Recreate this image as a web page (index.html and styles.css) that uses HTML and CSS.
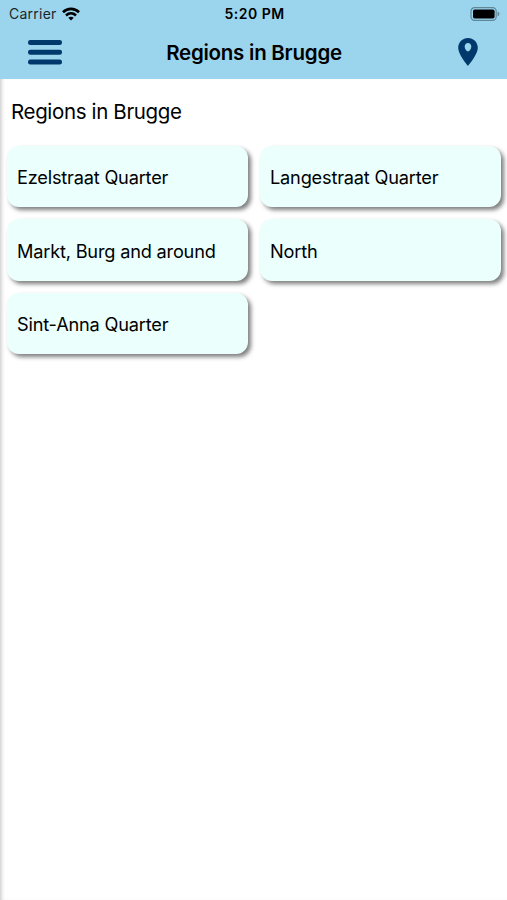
FILE: index.html
```
<!DOCTYPE html>
<html lang="en">
<head>
    <meta charset="UTF-8">
    <meta name="viewport" content="width=device-width, initial-scale=1.0">
    <title>Regions in Brugge</title>
    <link rel="stylesheet" href="styles.css">
</head>
<body>
    <header class="header">
        <div class="status-bar">
            <div class="status-left">
                <span class="carrier">Carrier</span>
                <svg class="wifi" width="18" height="14" viewBox="0 0 18 14" fill="none" stroke="#000" stroke-width="2.7">
                    <path d="M1 5.2C5.6.8 12.4.8 17 5.2"/>
                    <path d="M4 8.4c2.9-2.7 7.1-2.7 10 0"/>
                    <path d="M9 13.6l-2.7-2.8c1.5-1.4 3.9-1.4 5.4 0z" fill="#000" stroke="none"/>
                </svg>
            </div>
            <span class="time">5:20 PM</span>
            <svg class="battery" width="30" height="14" viewBox="0 0 30 14">
                <rect x="1" y=".7" width="25.2" height="12.6" rx="3.6" fill="none" stroke="#5f8798" stroke-width="1.2"/>
                <rect x="3" y="2.4" width="21.6" height="9.2" rx="1.8" fill="#000"/>
                <path d="M27.6 4.6c2.4.8 2.4 4 0 4.8z" fill="#5f8798"/>
            </svg>
        </div>
        <div class="nav-bar">
            <button class="nav-button" title="Menu">
                <svg width="34" height="25" viewBox="0 0 34 25" fill="#003a6c">
                    <rect width="34" height="5" rx="2.3"/>
                    <rect y="9.8" width="34" height="5" rx="2.3"/>
                    <rect y="19.6" width="34" height="5" rx="2.3"/>
                </svg>
            </button>
            <h1>Regions in Brugge</h1>
            <button class="nav-button" title="Map">
                <svg width="20" height="28" viewBox="0 0 20 28" fill="#003a6c">
                    <path fill-rule="evenodd" d="M10 0C4.5 0 .2 4.3.2 9.8.2 16.6 10 28 10 28s9.8-11.4 9.8-18.2C19.8 4.3 15.5 0 10 0zm0 5c1.9 0 3.3 1.6 3.3 3.6 0 2.3-1.7 4.8-3.3 4.8s-3.3-2.5-3.3-4.8c0-2 1.4-3.6 3.3-3.6z"/>
                </svg>
            </button>
        </div>
    </header>
    <main class="content">
        <h2>Regions in Brugge</h2>
        <div class="regions">
            <div class="region">Ezelstraat Quarter</div>
            <div class="region">Langestraat Quarter</div>
            <div class="region">Markt, Burg and around</div>
            <div class="region">North</div>
            <div class="region">Sint-Anna Quarter</div>
        </div>
    </main>
</body>
</html>
```
FILE: styles.css
```
* {
    box-sizing: border-box;
}

body {
    font-family: Inter, 'Liberation Sans', sans-serif;
    background-color: #fff;
    color: #000;
    margin: 0;
    height: 100vh;
    display: flex;
    flex-direction: column;
    overflow: hidden;
}

.header {
    height: 79px;
    flex-shrink: 0;
    background-color: #9bd5ed;
}

.status-bar {
    height: 27px;
    padding: 0 7px 0 9px;
    display: grid;
    grid-template-columns: 1fr auto 1fr;
    align-items: center;
}

.status-left {
    display: flex;
    align-items: center;
    gap: 5px;
}

.carrier {
    font-size: 14px;
    letter-spacing: 0.25px;
    color: #1c272b;
}

.time {
    font-size: 14px;
    font-weight: 600;
    letter-spacing: 0.5px;
}

.battery {
    justify-self: end;
}

.nav-bar {
    height: 50px;
    padding: 0 29px 0 28px;
    display: flex;
    justify-content: space-between;
    align-items: center;
}

.nav-button {
    width: 34px;
    padding: 0;
    border: none;
    background: none;
    display: flex;
    justify-content: flex-start;
    cursor: pointer;
}

.nav-button:last-child {
    justify-content: flex-end;
}

.nav-bar h1 {
    margin: 1px 0 0 2px;
    font-size: 20.5px;
    font-weight: 600;
    letter-spacing: -0.25px;
}

.content {
    flex-grow: 1;
    padding: 20px 6px 0 7px;
    box-shadow: inset 4px 0 4px -3px rgba(0, 0, 0, 0.25);
}

.content h2 {
    margin: 0 0 22px 4px;
    font-size: 20.5px;
    line-height: 25px;
    font-weight: 400;
    letter-spacing: -0.35px;
}

.regions {
    display: grid;
    grid-template-columns: 1fr 1fr;
    gap: 12px;
}

.region {
    height: 61.4px;
    padding: 1px 10px 0;
    border-radius: 12px;
    background-color: #ebfffd;
    box-shadow: 3px 3px 4px rgba(0, 0, 0, 0.5);
    display: flex;
    align-items: center;
    font-size: 18.2px;
    letter-spacing: -0.2px;
}
```
